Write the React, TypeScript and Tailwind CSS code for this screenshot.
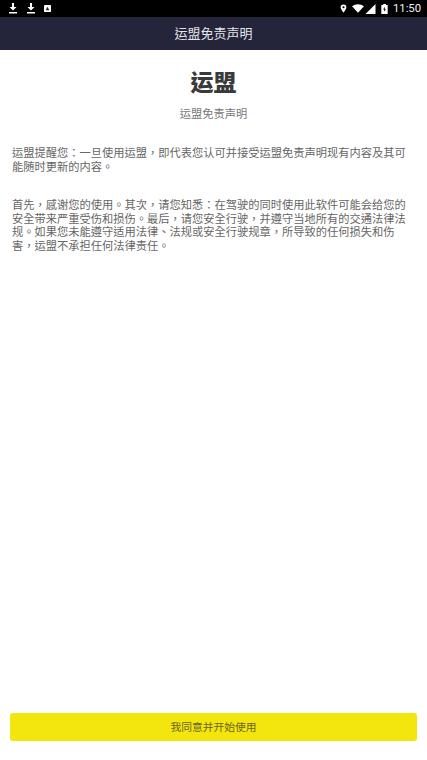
const FONT = "font-['Roboto','Noto_Sans_CJK_TC',sans-serif]"

function StatusBar() {
  return (
    <div className="h-[17px] bg-black flex items-center justify-between pl-[9px] pr-[6px] text-white">
      <div className="flex items-center">
        <svg width="8" height="11" viewBox="0 0 8 11" fill="#fff" className="mr-[10px]">
          <path d="M3 0h2v4h2.500L4 7.500.5 4H3zM0 9h8v1.500H0z" />
        </svg>
        <svg width="8" height="11" viewBox="0 0 8 11" fill="#fff" className="mr-[9px]">
          <path d="M3 0h2v4h2.500L4 7.500.5 4H3zM0 9h8v1.500H0z" />
        </svg>
        <svg width="7" height="7" viewBox="0 0 8 8">
          <rect width="8" height="8" rx="1" fill="#fff" />
          <path d="M2 6L4 2l2 4z" fill="#222" />
        </svg>
      </div>
      <div className="flex items-center">
        <svg width="7" height="9" viewBox="0 0 8 11" className="mr-[5px]">
          <path d="M4 .5A3.500 3.500 0 0 1 7.500 4C7.500 6.500 4 10.500 4 10.500S.5 6.500.5 4A3.500 3.500 0 0 1 4 .5z" fill="#fff" />
          <circle cx="4" cy="4" r="1.300" fill="#000" />
        </svg>
        <svg width="12" height="9" viewBox="0 0 14 10" className="mr-[1px]">
          <path d="M0 2.500C4-.8 10-.8 14 2.500L7 10z" fill="#fff" />
        </svg>
        <svg width="11" height="10" viewBox="0 0 10 10" className="mr-[5px]">
          <path d="M10 0v10H0z" fill="#fff" />
        </svg>
        <svg width="7" height="10" viewBox="0 0 7 11" className="mr-[5px]">
          <path d="M2 0h3v1h2v10H0V1h2z" fill="#fff" />
          <path d="M3.800 3L2 6h1.200v2.500L5 5.500H3.800z" fill="#000" />
        </svg>
        <span className="font-['Roboto',sans-serif] text-[11.250px] leading-none text-[#f2f2f2]">11:50</span>
      </div>
    </div>
  )
}

export default function App() {
  return (
    <div className={`${FONT} h-[760px] flex flex-col bg-white`}>
      <StatusBar />
      <div className="h-[33px] bg-[#24243a] flex items-center justify-center text-[13px] text-[#e4e4ea]">
        运盟免责声明
      </div>
      <div className="flex-1 px-[12px]">
        <h1 className="mt-[18px] text-center text-[23px] leading-[32px] font-black text-[#3a3a3a]">运盟</h1>
        <p className="mt-[7px] text-center text-[11.250px] leading-[16px] text-[#777]">运盟免责声明</p>
        <p className="mt-[24px] text-[11.250px] leading-[14px] text-[#666]">
          运盟提醒您：一旦使用运盟，即代表您认可并接受运盟免责声明现有内容及其可能随时更新的内容。
        </p>
        <p className="mt-[24px] text-[11.250px] leading-[13.700px] text-[#666]">
          首先，感谢您的使用。其次，请您知悉：在驾驶的同时使用此软件可能会给您的安全带来严重受伤和损伤。最后，请您安全行驶，并遵守当地所有的交通法律法规。如果您未能遵守适用法律、法规或安全行驶规章，所导致的任何损失和伤害，运盟不承担任何法律责任。
        </p>
      </div>
      <div className="px-[10px] pb-[19px]">
        <button className="w-full h-[28px] pt-[2px] rounded-[3px] bg-[#f3e60f] text-[10.750px] text-[#6b6420]">
          我同意并开始使用
        </button>
      </div>
    </div>
  )
}
